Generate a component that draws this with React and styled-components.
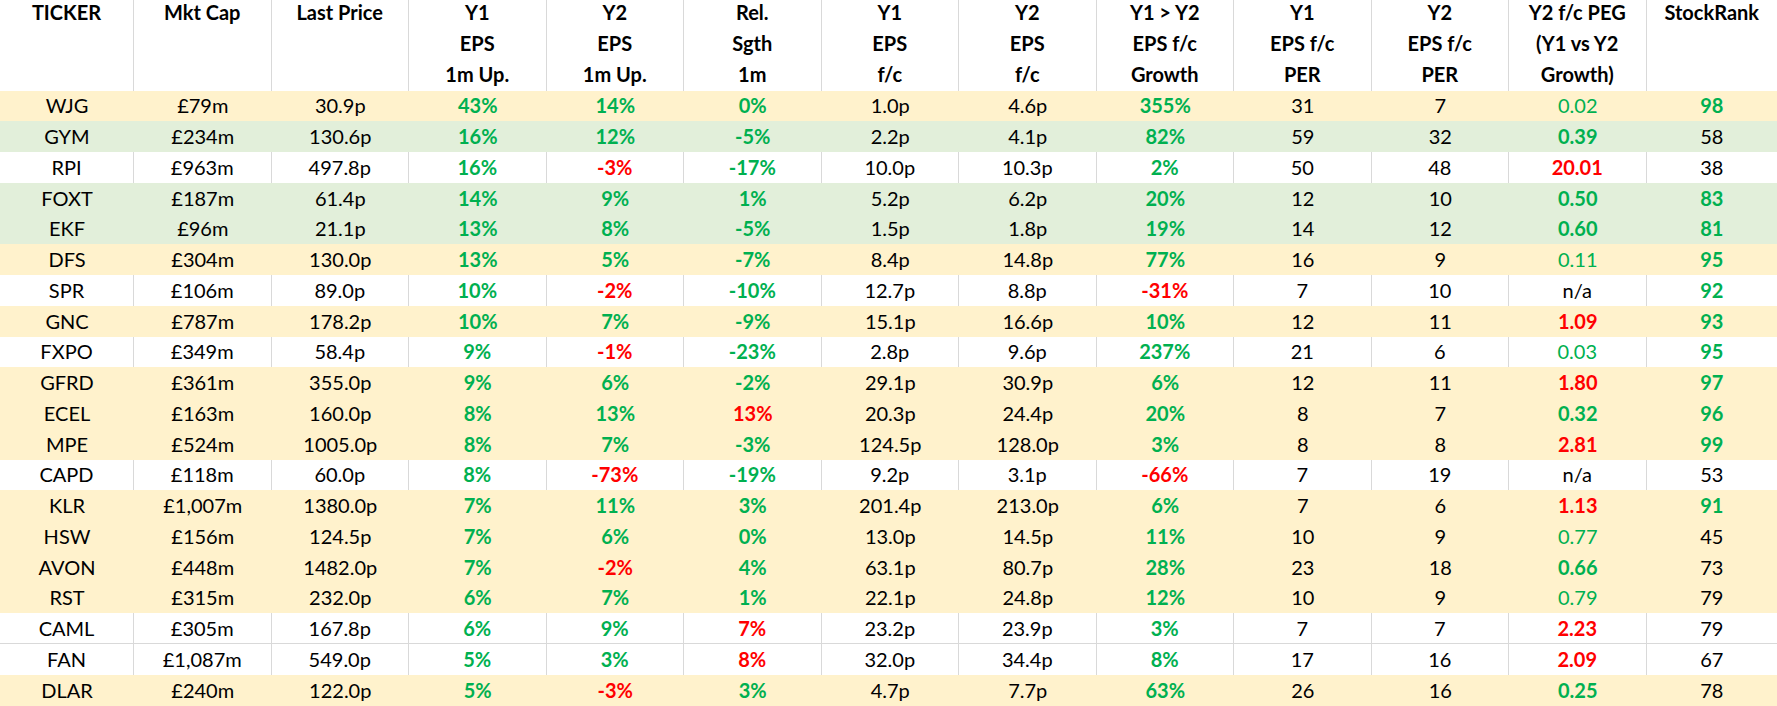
import React from "react";
import styled, { createGlobalStyle } from "styled-components";

const G = (v) => ({ v, tone: "green", bold: true });
const R = (v) => ({ v, tone: "red", bold: true });
const L = (v) => ({ v, tone: "green", bold: false });

const headers = [
  ["TICKER"],
  ["Mkt Cap"],
  ["Last Price"],
  ["Y1", "EPS", "1m Up."],
  ["Y2", "EPS", "1m Up."],
  ["Rel.", "Sgth", "1m"],
  ["Y1", "EPS", "f/c"],
  ["Y2", "EPS", "f/c"],
  ["Y1 > Y2", "EPS f/c", "Growth"],
  ["Y1", "EPS f/c", "PER"],
  ["Y2", "EPS f/c", "PER"],
  ["Y2 f/c PEG", "(Y1 vs Y2", "Growth)"],
  ["StockRank"],
];

const rows = [
  { fill: "yellow", cells: ["WJG", "£79m", "30.9p", G("43%"), G("14%"), G("0%"), "1.0p", "4.6p", G("355%"), "31", "7", L("0.02"), G("98")] },
  { fill: "green", cells: ["GYM", "£234m", "130.6p", G("16%"), G("12%"), G("-5%"), "2.2p", "4.1p", G("82%"), "59", "32", G("0.39"), "58"] },
  { fill: "white", cells: ["RPI", "£963m", "497.8p", G("16%"), R("-3%"), G("-17%"), "10.0p", "10.3p", G("2%"), "50", "48", R("20.01"), "38"] },
  { fill: "green", cells: ["FOXT", "£187m", "61.4p", G("14%"), G("9%"), G("1%"), "5.2p", "6.2p", G("20%"), "12", "10", G("0.50"), G("83")] },
  { fill: "green", cells: ["EKF", "£96m", "21.1p", G("13%"), G("8%"), G("-5%"), "1.5p", "1.8p", G("19%"), "14", "12", G("0.60"), G("81")] },
  { fill: "yellow", cells: ["DFS", "£304m", "130.0p", G("13%"), G("5%"), G("-7%"), "8.4p", "14.8p", G("77%"), "16", "9", L("0.11"), G("95")] },
  { fill: "white", cells: ["SPR", "£106m", "89.0p", G("10%"), R("-2%"), G("-10%"), "12.7p", "8.8p", R("-31%"), "7", "10", "n/a", G("92")] },
  { fill: "yellow", cells: ["GNC", "£787m", "178.2p", G("10%"), G("7%"), G("-9%"), "15.1p", "16.6p", G("10%"), "12", "11", R("1.09"), G("93")] },
  { fill: "white", cells: ["FXPO", "£349m", "58.4p", G("9%"), R("-1%"), G("-23%"), "2.8p", "9.6p", G("237%"), "21", "6", L("0.03"), G("95")] },
  { fill: "yellow", cells: ["GFRD", "£361m", "355.0p", G("9%"), G("6%"), G("-2%"), "29.1p", "30.9p", G("6%"), "12", "11", R("1.80"), G("97")] },
  { fill: "yellow", cells: ["ECEL", "£163m", "160.0p", G("8%"), G("13%"), R("13%"), "20.3p", "24.4p", G("20%"), "8", "7", G("0.32"), G("96")] },
  { fill: "yellow", cells: ["MPE", "£524m", "1005.0p", G("8%"), G("7%"), G("-3%"), "124.5p", "128.0p", G("3%"), "8", "8", R("2.81"), G("99")] },
  { fill: "white", cells: ["CAPD", "£118m", "60.0p", G("8%"), R("-73%"), G("-19%"), "9.2p", "3.1p", R("-66%"), "7", "19", "n/a", "53"] },
  { fill: "yellow", cells: ["KLR", "£1,007m", "1380.0p", G("7%"), G("11%"), G("3%"), "201.4p", "213.0p", G("6%"), "7", "6", R("1.13"), G("91")] },
  { fill: "yellow", cells: ["HSW", "£156m", "124.5p", G("7%"), G("6%"), G("0%"), "13.0p", "14.5p", G("11%"), "10", "9", L("0.77"), "45"] },
  { fill: "yellow", cells: ["AVON", "£448m", "1482.0p", G("7%"), R("-2%"), G("4%"), "63.1p", "80.7p", G("28%"), "23", "18", G("0.66"), "73"] },
  { fill: "yellow", cells: ["RST", "£315m", "232.0p", G("6%"), G("7%"), G("1%"), "22.1p", "24.8p", G("12%"), "10", "9", L("0.79"), "79"] },
  { fill: "white", ruled: true, cells: ["CAML", "£305m", "167.8p", G("6%"), G("9%"), R("7%"), "23.2p", "23.9p", G("3%"), "7", "7", R("2.23"), "79"] },
  { fill: "white", cells: ["FAN", "£1,087m", "549.0p", G("5%"), G("3%"), R("8%"), "32.0p", "34.4p", G("8%"), "17", "16", R("2.09"), "67"] },
  { fill: "yellow", cells: ["DLAR", "£240m", "122.0p", G("5%"), R("-3%"), G("3%"), "4.7p", "7.7p", G("63%"), "26", "16", G("0.25"), "78"] },
];

const fills = {
  white: "#ffffff",
  yellow: "#fff2cc",
  green: "#e2efda",
};

const tones = {
  black: "#000000",
  green: "#00b050",
  red: "#ff0000",
};

const GlobalStyle = createGlobalStyle`
  html, body {
    margin: 0;
    padding: 0;
    background: #ffffff;
    overflow: hidden;
  }
  body {
    font-family: Lato, "Liberation Sans", sans-serif;
  }
`;

const Sheet = styled.div`
  width: 1777px;
  height: 706px;
  display: flex;
  flex-direction: column;
  background: #ffffff;
  font-family: Lato, "Liberation Sans", sans-serif;
  font-size: 20px;
  color: #000;
`;

const Row = styled.div`
  display: grid;
  grid-template-columns: 134px repeat(11, 137.5px) 1fr;
  height: ${(p) => p.$height}px;
  flex-shrink: 0;
  background: ${(p) => fills[p.$fill]};
  box-sizing: border-box;
  border-bottom: ${(p) => (p.$ruled ? "1px solid #d9d9d9" : "none")};
`;

const HeadCell = styled.div`
  display: flex;
  flex-direction: column;
  align-items: center;
  font-weight: 700;
  line-height: 31px;
  margin-top: -3px;
  margin-bottom: -3px;
  border-right: ${(p) => (p.$last ? "none" : "1px solid #d9d9d9")};
`;

const Cell = styled.div`
  display: flex;
  align-items: center;
  justify-content: center;
  padding-bottom: 1px;
  line-height: 1;
  font-weight: ${(p) => (p.$bold ? 700 : 400)};
  color: ${(p) => tones[p.$tone]};
  border-right: ${(p) => (p.$grid && !p.$last ? "1px solid #d9d9d9" : "none")};
  white-space: nowrap;
`;

export default function App() {
  return (
    <>
      <GlobalStyle />
      <Sheet>
        <Row $fill="white" $height={90.5}>
          {headers.map((lines, i) => (
            <HeadCell key={i} $last={i === headers.length - 1}>
              {lines.map((line) => (
                <span key={line}>{line}</span>
              ))}
            </HeadCell>
          ))}
        </Row>
        {rows.map((row) => (
          <Row key={row.cells[0]} $fill={row.fill} $ruled={row.ruled} $height={30.75}>
            {row.cells.map((c, i) => {
              const cell = typeof c === "string" ? { v: c, tone: "black", bold: false } : c;
              return (
                <Cell
                  key={i}
                  $tone={cell.tone}
                  $bold={cell.bold}
                  $grid={row.fill === "white"}
                  $last={i === row.cells.length - 1}
                >
                  {cell.v}
                </Cell>
              );
            })}
          </Row>
        ))}
      </Sheet>
    </>
  );
}
